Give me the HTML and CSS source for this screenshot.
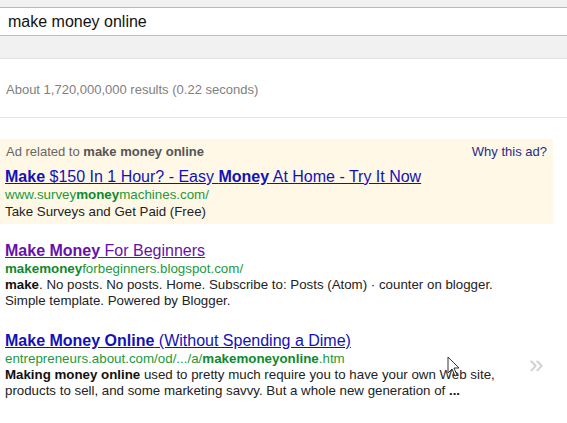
FILE: index.html
```html
<!DOCTYPE html>
<html>
<head>
<meta charset="utf-8">
<link rel="stylesheet" href="styles.css">
</head>
<body>
<div class="topbar"></div>
<div class="search">make money online</div>
<div class="tabs"></div>
<div class="stats">About 1,720,000,000 results (0.22 seconds)</div>
<div class="divider"></div>
<div class="ad">
  <div class="ad-head">
    <span>Ad related to <b>make money online</b></span>
    <a class="why">Why this ad?</a>
  </div>
  <a class="title"><b>Make</b> $150 In 1 Hour? - Easy <b>Money</b> At Home - Try It Now</a>
  <div class="url">www.survey<b>money</b>machines.com/</div>
  <div class="desc">Take Surveys and Get Paid (Free)</div>
</div>
<div class="result r2">
  <a class="title visited"><b>Make Money</b> For Beginners</a>
  <div class="url"><b>makemoney</b>forbeginners.blogspot.com/</div>
  <div class="desc"><b>make</b>. No posts. No posts. Home. Subscribe to: Posts (Atom) · counter on blogger.<br>Simple template. Powered by Blogger.</div>
</div>
<div class="result r3">
  <a class="title"><b>Make Money Online</b> (Without Spending a Dime)</a>
  <div class="url">entrepreneurs.about.com/od/.../a/<b>makemoneyonline</b>.htm</div>
  <div class="desc"><b>Making money online</b> used to pretty much require you to have your own Web site,<br>products to sell, and some marketing savvy. But a whole new generation of <b>...</b></div>
  <span class="chev">»</span>
</div>
<svg class="cursor" width="14" height="22" viewBox="0 0 14 22">
  <path d="M1 1 L1 17 L5 13 L8 20 L10 19 L7 12 L12 12 Z" fill="#fff" stroke="#333" stroke-width="1"/>
</svg>
</body>
</html>
```
FILE: styles.css
```css
body {
  margin: 0;
  font-family: "Liberation Sans", Arial, sans-serif;
  background: #fff;
  color: #222;
  position: relative;
  min-height: 423px;
}
.topbar {
  height: 7px;
  background: #f1f1f1;
  border-bottom: 1px solid #b8b8b8;
}
.search {
  height: 27px;
  line-height: 27px;
  padding-left: 8px;
  font-size: 16px;
  color: #111;
  border-bottom: 1px solid #bdbdbd;
}
.tabs {
  height: 22px;
  background: #f1f1f1;
  border-bottom: 1px solid #e3e3e3;
}
.stats {
  margin-top: 23px;
  padding-left: 6px;
  font-size: 13px;
  line-height: 16px;
  color: #808080;
}
.divider {
  margin-top: 19px;
  height: 1px;
  background: #e5e5e5;
}
.ad {
  margin-top: 21px;
  width: 553px;
  background: #fff8e7;
  padding: 5px 0 4px 0;
  box-sizing: border-box;
}
.ad-head {
  display: flex;
  justify-content: space-between;
  padding: 0 6px 0 6px;
  font-size: 13px;
  line-height: 16px;
  color: #666;
}
.ad-head b { color: #555; }
.why {
  color: #2a2a8c;
}
.title {
  display: inline-block;
  margin-left: 5px;
  font-size: 16px;
  line-height: 20px;
  color: #1212b8;
  text-decoration: underline;
}
.ad .title { margin-top: 7px; }
.title.visited { color: #6611aa; }
.url {
  padding-left: 5px;
  font-size: 13.35px;
  line-height: 16px;
  color: #1b9a3c;
}
.url b { color: #0d8a2c; }
.desc {
  padding-left: 5px;
  font-size: 13.3px;
  line-height: 16px;
  color: #222;
}
.ad .desc { line-height: 17px; }
.desc b { color: #111; }
.result { position: relative; }
.r2 { margin-top: 17px; }
.r3 { margin-top: 22px; }
.chev {
  position: absolute;
  left: 529px;
  top: 21px;
  font-size: 26px;
  line-height: 24px;
  color: #d0d0d0;
}
.cursor {
  position: absolute;
  left: 447px;
  top: 356px;
}
```
